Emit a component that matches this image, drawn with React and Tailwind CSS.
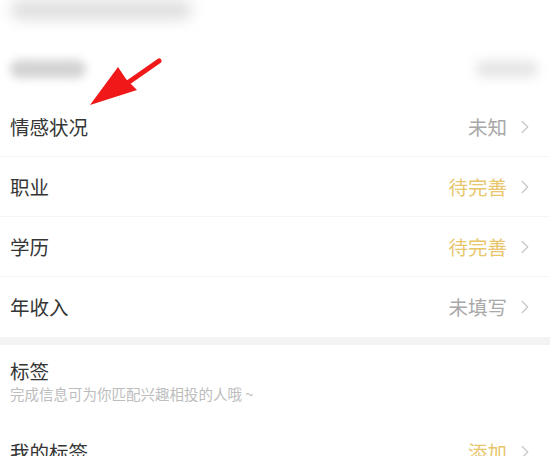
import { ChevronRight } from 'lucide-react';

const rows = [
  { label: '情感状况', value: '未知', tone: 'gray' },
  { label: '职业', value: '待完善', tone: 'gold' },
  { label: '学历', value: '待完善', tone: 'gold' },
  { label: '年收入', value: '未填写', tone: 'gray' },
];

function Row({ label, value, tone, last }) {
  return (
    <div className={`flex h-[60px] items-center justify-between pl-[10px] pr-[14px] ${last ? '' : 'border-b border-[#f5f5f5]'}`}>
      <span className="text-[19.5px] text-[#353535]">{label}</span>
      <div className="flex items-center gap-[7px]">
        <span className={`text-[19.5px] ${tone === 'gold' ? 'text-[#e8c66c]' : 'text-[#a8a8a8]'}`}>{value}</span>
        <ChevronRight className="h-[22px] w-[22px] text-[#c9c9c9]" strokeWidth={1.4} />
      </div>
    </div>
  );
}

export default function App() {
  return (
    <div className="relative h-[456px] w-[550px] overflow-hidden bg-white" style={{ fontFamily: '"Noto Sans CJK SC", "Noto Sans", sans-serif' }}>
      {/* blurred top content */}
      <div className="h-[40px] pl-[10px]">
        <div className="h-[20px] w-[182px] rounded-full bg-[#e0e0e0] blur-[7px]" />
      </div>
      <div className="flex h-[57px] items-center justify-between pl-[10px] pr-[12px]">
        <div className="h-[18px] w-[76px] rounded-full bg-[#d2d2d2] blur-[5px]" />
        <div className="h-[16px] w-[62px] rounded-full bg-[#e4e4e4] blur-[6px]" />
      </div>

      {rows.map((r, i) => (
        <Row key={r.label} {...r} last={i === rows.length - 1} />
      ))}

      <div className="h-[8px] bg-[#f3f3f3]" />

      <div className="pl-[10px] pt-[12px]">
        <div className="text-[19.5px] leading-[27px] text-[#353535]">标签</div>
        <div className="text-[14.5px] leading-[20px] text-[#bdbdbd]">完成信息可为你匹配兴趣相投的人哦 ~</div>
      </div>

      <div className="mt-[34px] flex items-center justify-between pl-[10px] pr-[14px]">
        <span className="text-[19.5px] leading-[28px] text-[#353535]">我的标签</span>
        <div className="flex items-center gap-[7px]">
          <span className="text-[19.5px] leading-[28px] text-[#e8c66c]">添加</span>
          <ChevronRight className="h-[22px] w-[22px] text-[#c9c9c9]" strokeWidth={1.4} />
        </div>
      </div>

      {/* red annotation arrow */}
      <svg className="pointer-events-none absolute left-0 top-0" width="550" height="456" viewBox="0 0 550 456">
        <line x1="159" y1="61" x2="126" y2="84" stroke="#f01818" strokeWidth="5" strokeLinecap="round" />
        <polygon points="90,105 118,67 126,79 137,90" fill="#f01818" />
      </svg>
    </div>
  );
}
